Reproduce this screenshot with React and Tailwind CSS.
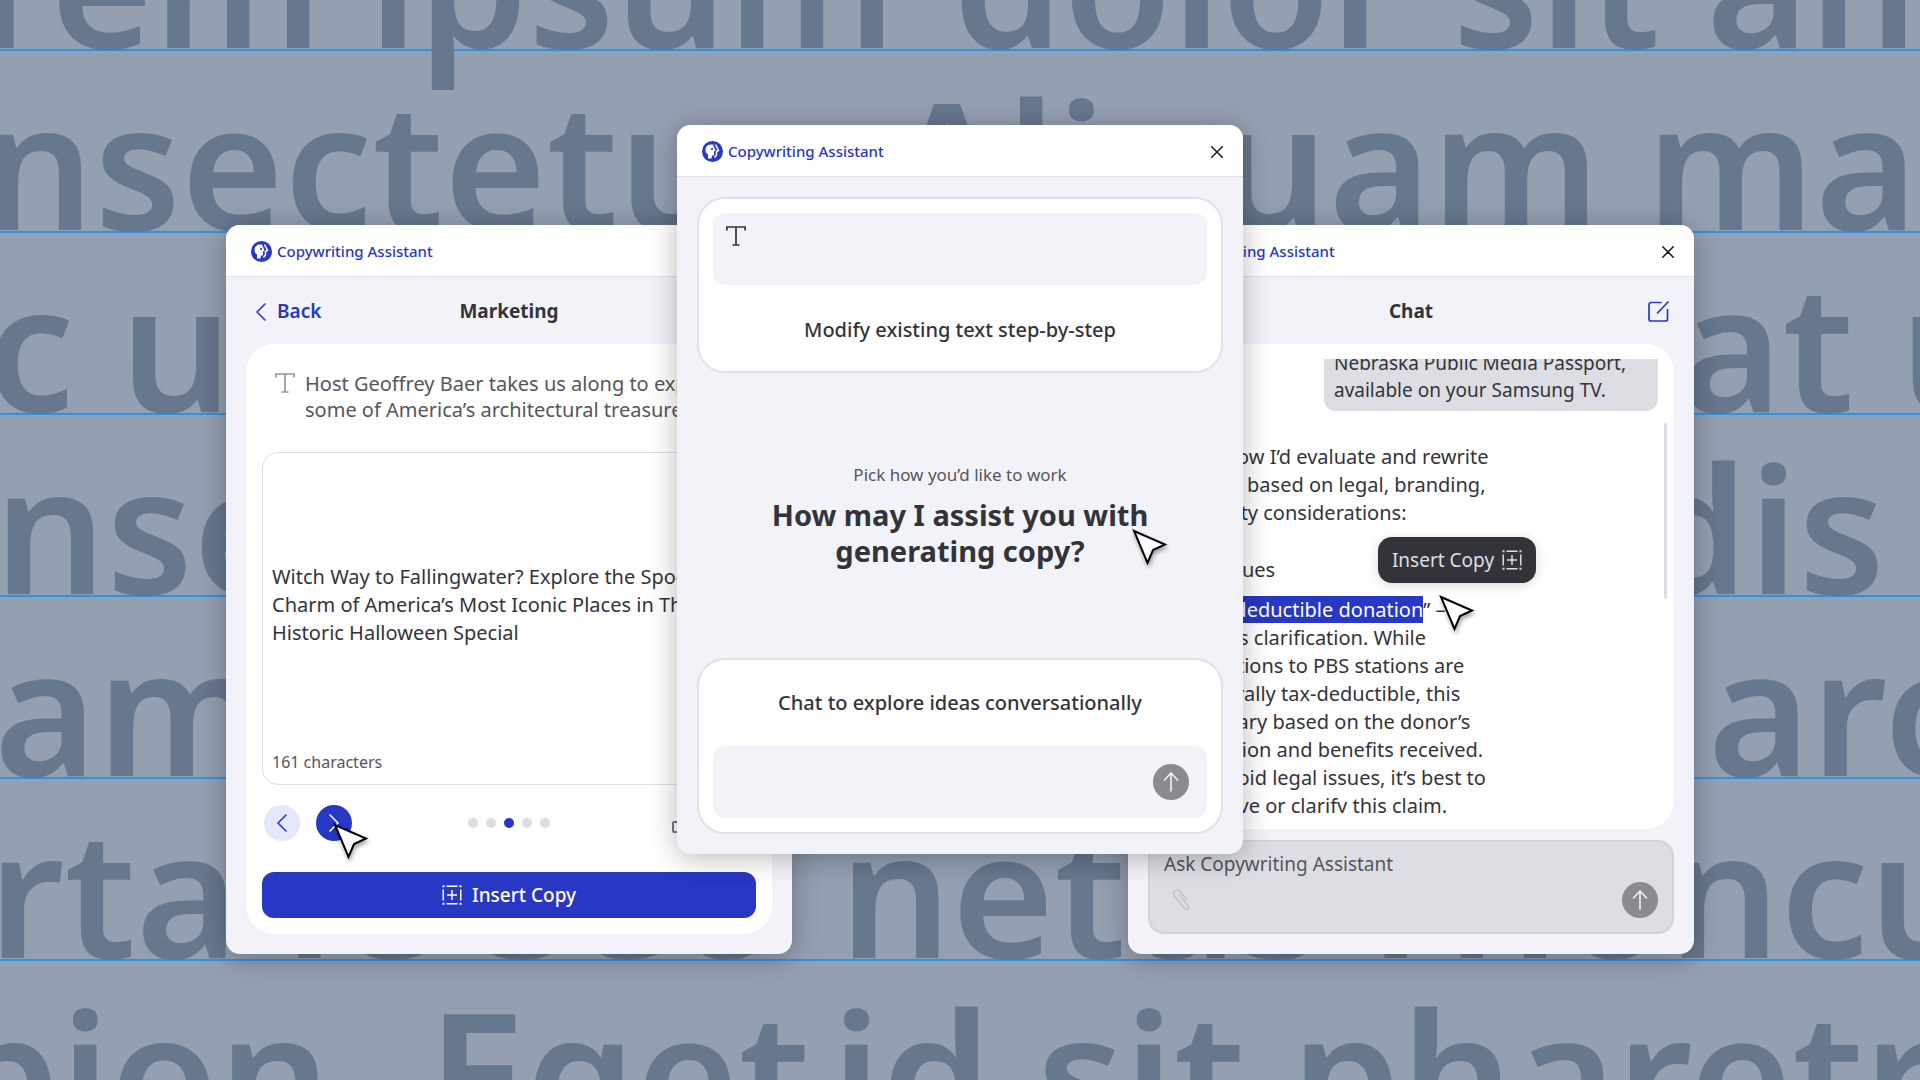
const backdropLines = [
  { left: 'orem ipsum', right: 'dolor sit am', leftShift: '-ml-[131px]', rightShift: '-mr-[58px]' },
  { left: 'nsectetur.', right: 'Aliquam ma', leftShift: '-ml-[18px]', rightShift: 'mr-[2px]' },
  { left: 'c ut', right: 'at u', leftShift: '-ml-[14px]', rightShift: '-mr-[92px]' },
  { left: 'nse', right: 'dis', leftShift: '-ml-[6px]', rightShift: 'mr-[35px]' },
  { left: 'am', right: 'arc', leftShift: '-ml-[6px]', rightShift: '-mr-[52px]' },
  { left: 'rta le sec', mid: 'net', right: 'us rhoncu', leftShift: '-ml-[12px]', midShift: 'ml-[78px]', rightShift: '-mr-[20px]' },
  { left: 'pion.', mid: 'Eget', right: 'id sit pharetr', leftShift: '-ml-[50px]', midShift: 'ml-[48px]', rightShift: '-mr-[20px]' },
];

function Backdrop() {
  return (
    <div aria-hidden="true" className="absolute inset-0 overflow-hidden select-none">
      <div className="-mt-[131px] flex flex-col">
        {backdropLines.map((line) => (
          <div
            key={line.left}
            className="flex h-[182px] shrink-0 border-b-2 border-[#2b93e6] pt-5 text-[176px] leading-[182px] font-semibold whitespace-pre text-[#67778e]"
          >
            <span className={line.leftShift}>{line.left}</span>
            {line.mid && <span className={line.midShift}>{line.mid}</span>}
            <span className={`ml-auto ${line.rightShift}`}>{line.right}</span>
          </div>
        ))}
      </div>
    </div>
  );
}

function Logo() {
  return (
    <svg viewBox="0 0 42 42" className="size-[21px]" aria-hidden="true">
      <circle cx="21" cy="21" r="21" fill="#2638c4" />
      <path d="M7 18c0-7 5-11 11-11h4l5 12-3 2v8h-4l-1 6h-7v-8c-3-2-5-5-5-9z" fill="#fff" />
      <path d="M25 7l6 12-4 2v8l-3 1" fill="none" stroke="#2638c4" strokeWidth="2" />
      <path d="M27 7l6 12-4 2v7l-4 5" fill="none" stroke="#fff" strokeWidth="3" />
      <circle cx="20" cy="16" r="2.200" fill="#2638c4" />
    </svg>
  );
}

function TextIcon({ className }) {
  return (
    <svg viewBox="0 0 20 20" className={`size-5 shrink-0 ${className}`} fill="none" stroke="currentColor" strokeWidth="1.7" aria-hidden="true">
      <path d="M.9 4.500V1h18.200v3.500M10 1v18M6.500 19h7" />
    </svg>
  );
}

function InsertIcon() {
  return (
    <svg viewBox="0 0 20 20" className="size-5 shrink-0" fill="none" stroke="currentColor" strokeWidth="1.5" aria-hidden="true">
      <path d="M4.5 1.25h11M4.5 18.75h11M1.25 4.5v11M18.75 4.5v11M10 5v10M5 10h10" />
      <path d="M.5 1.25H2.500M17.500 1.25h2M.5 18.75h2M17.500 18.75h2" strokeWidth="2" />
    </svg>
  );
}

function CloseIcon() {
  return (
    <svg viewBox="0 0 12 12" className="size-3" fill="none" stroke="currentColor" strokeWidth="1.5" strokeLinecap="round" aria-hidden="true">
      <path d="M.75.75l10.500 10.500M11.250.75L.75 11.250" />
    </svg>
  );
}

function Chevron({ flip }) {
  return (
    <svg viewBox="0 0 10 18" className={flip ? 'h-[18px] w-[10px] rotate-180' : 'h-[18px] w-[10px]'} fill="none" stroke="currentColor" strokeWidth="1.6" strokeLinecap="round" strokeLinejoin="round" aria-hidden="true">
      <path d="M9 1L1 9l8 8" />
    </svg>
  );
}

function Cursor({ className }) {
  return (
    <svg viewBox="0 0 36 38" className={`pointer-events-none absolute z-20 h-[38px] w-9 drop-shadow-[1px_3px_2px_rgba(0,0,0,0.35)] ${className}`} aria-hidden="true">
      <path d="M2 2l31 13.500-12 5.500-5.500 13z" fill="#fff" stroke="#000" strokeWidth="2" />
    </svg>
  );
}

function SendButton() {
  return (
    <button type="button" aria-label="Send" className="flex size-9 shrink-0 items-center justify-center rounded-full bg-[#8b8b8f] text-[#f2f3f8]">
      <svg viewBox="0 0 16 20" className="h-5 w-4" fill="none" stroke="currentColor" strokeWidth="1.6" strokeLinecap="round" strokeLinejoin="round" aria-hidden="true">
        <path d="M8 19V1M1.500 8L8 1l6.500 7" />
      </svg>
    </button>
  );
}

function Window({ className, children }) {
  return (
    <section className={`relative flex h-[729px] w-[566px] shrink-0 flex-col rounded-[14px] bg-[#f2f3f8] shadow-[0_4px_28px_rgba(0,0,0,0.28)] ${className}`}>
      <header className="flex h-[52px] shrink-0 items-center justify-between rounded-t-[14px] border-b border-[#e1e2e6] bg-white px-5 pt-0.5">
        <div className="flex items-center gap-[5px] pl-[5px] text-[15px] font-medium text-[#2638c4]">
          <Logo />
          Copywriting Assistant
        </div>
        <button type="button" aria-label="Close" className="flex size-3 items-center justify-center text-[#1c1c20]">
          <CloseIcon />
        </button>
      </header>
      {children}
    </section>
  );
}

function MarketingWindow() {
  return (
    <Window className="mt-[100px]">
      <div className="grid h-[67px] shrink-0 grid-cols-3 items-center px-[30px] pt-0.5">
        <button type="button" className="flex items-center gap-[11px] text-[19px] font-semibold text-[#2638c4]">
          <Chevron />
          Back
        </button>
        <h2 className="text-center text-[19px] font-bold text-[#33343a]">Marketing</h2>
      </div>
      <div className="mx-5 mb-5 flex flex-1 flex-col rounded-[28px] bg-white px-4 pt-[27px] pb-4">
        <div className="flex gap-[10px] pl-[13px] text-[#55565c]">
          <TextIcon className="mt-[2px] text-[#96979c]" />
          <p className="text-[20px] leading-[26px] whitespace-nowrap">
            Host Geoffrey Baer takes us along to explore
            <br />
            some of America’s architectural treasures.
          </p>
        </div>
        <div className="mt-[29px] flex h-[333px] flex-col rounded-2xl border border-[#dddee3] px-[9px] pb-[10px]">
          <p className="flex flex-1 flex-col justify-center pt-1.5 text-[20px] leading-7 whitespace-nowrap text-[#33343a]">
            <span>Witch Way to Fallingwater? Explore the Spooky</span>
            <span>Charm of America’s Most Iconic Places in This</span>
            <span>Historic Halloween Special</span>
          </p>
          <span className="text-[16px] leading-6 text-[#55565c]">161 characters</span>
        </div>
        <div className="mt-5 flex items-center justify-between px-[2px]">
          <div className="flex w-24 gap-4">
            <button type="button" aria-label="Previous" className="flex size-9 items-center justify-center rounded-full bg-[#e3e8fa] text-[#2638c4]">
              <Chevron />
            </button>
            <button type="button" aria-label="Next" className="relative flex size-9 items-center justify-center rounded-full bg-[#2638c4] text-white">
              <Chevron flip />
              <Cursor className="top-[18px] left-[17px]" />
            </button>
          </div>
          <div className="flex gap-2">
            <span className="size-2.5 rounded-full bg-[#dddee3]" />
            <span className="size-2.5 rounded-full bg-[#dddee3]" />
            <span className="size-2.5 rounded-full bg-[#2638c4]" />
            <span className="size-2.5 rounded-full bg-[#dddee3]" />
            <span className="size-2.5 rounded-full bg-[#dddee3]" />
          </div>
          <div className="flex w-24 pl-[14px] pt-2 text-[#77787d]">
            <span className="h-3 w-4 rounded-[2px] border-2 border-current" />
          </div>
        </div>
        <button type="button" className="mt-auto flex h-[46px] items-center justify-center gap-[10px] rounded-xl bg-[#2638c4] text-[19px] font-medium text-white">
          <InsertIcon />
          Insert Copy
        </button>
      </div>
    </Window>
  );
}

function StartWindow() {
  return (
    <Window className="z-10 -mx-[115px]">
      <div className="flex flex-1 flex-col justify-between px-5 pt-5 pb-5">
        <button type="button" className="flex h-44 flex-col rounded-[28px] border-2 border-[#e1e2e6] bg-white p-[14px]">
          <span className="flex h-[72px] w-full rounded-xl bg-[#f2f3f8] p-[13px]">
            <TextIcon className="text-[#33343a]" />
          </span>
          <span className="flex w-full flex-1 items-center justify-center pt-[18px] text-[20px] font-medium text-[#33343a]">
            Modify existing text step-by-step
          </span>
        </button>
        <div className="relative text-center">
          <p className="text-[17px] leading-6 text-[#55565c]">Pick how you’d like to work</p>
          <h1 className="mt-[10px] text-[29px] leading-9 font-bold text-[#33343a]">
            How may I assist you with
            <br />
            generating copy?
          </h1>
          <Cursor className="top-[66px] right-[55px]" />
        </div>
        <div className="flex h-44 flex-col rounded-[28px] border-2 border-[#e1e2e6] bg-white p-[14px]">
          <label htmlFor="start-chat" className="flex flex-1 items-center justify-center pb-[14px] text-[20px] font-medium text-[#33343a]">
            Chat to explore ideas conversationally
          </label>
          <div className="flex h-[72px] items-center rounded-xl bg-[#f2f3f8] pr-[18px] pl-4">
            <input id="start-chat" type="text" className="h-full min-w-0 flex-1 bg-transparent outline-none" />
            <SendButton />
          </div>
        </div>
      </div>
    </Window>
  );
}

function ChatWindow() {
  return (
    <Window className="mt-[100px]">
      <div className="grid h-[67px] shrink-0 grid-cols-3 items-center px-[25px] pt-0.5">
        <h2 className="col-start-2 text-center text-[19px] font-bold text-[#33343a]">Chat</h2>
        <button type="button" aria-label="New chat" className="justify-self-end text-[#2638c4]">
          <svg viewBox="0 0 21 21" className="size-[21px]" fill="none" stroke="currentColor" strokeWidth="1.700" strokeLinecap="round" strokeLinejoin="round" aria-hidden="true">
            <path d="M13 1.500H3A2 2 0 0 0 1 3.500v14.500a2 2 0 0 0 2 2h14.500a2 2 0 0 0 2-2V8.500M9.500 12L20 1" />
          </svg>
        </button>
      </div>
      <div className="mx-5 flex h-[485px] gap-[6px] rounded-[28px] bg-white pt-[15px] pb-4 pr-[7px] pl-[14px]">
        <div className="flex flex-1 flex-col overflow-hidden text-[20px] leading-7 whitespace-nowrap text-[#33343a]">
          <p className="-mt-[41px] flex w-[334px] shrink-0 flex-col self-end rounded-xl bg-[#dddee3] px-[10px] pt-[5px] pb-[7px] text-[19px] leading-[27px]">
            <span>Watch it now with</span>
            <span>Nebraska Public Media Passport,</span>
            <span>available on your Samsung TV.</span>
          </p>
          <div className="mt-8 flex flex-col">
            <span>Here’s how I’d evaluate and rewrite</span>
            <span>the copy based on legal, branding,</span>
            <span>for quality considerations:</span>
          </div>
          <span className="mt-[29px]">Legal issues</span>
          <div className="mt-3 flex flex-col pl-[27px]">
            <span>
              “<mark className="bg-[#2638c4] text-white">Tax-deductible donation</mark>” –
            </span>
            <span>Needs clarification. While</span>
            <span>donations to PBS stations are</span>
            <span>generally tax-deductible, this</span>
            <span>can vary based on the donor’s</span>
            <span>situation and benefits received.</span>
            <span>To avoid legal issues, it’s best to</span>
            <span>remove or clarify this claim.</span>
          </div>
        </div>
        <div className="mt-16 h-[176px] w-[3px] shrink-0 rounded-full bg-[#dddee3]" />
      </div>
      <button type="button" className="absolute top-[312px] left-[250px] flex h-[46px] w-[158px] items-center justify-center gap-2 rounded-[14px] bg-[#33343a] text-[19px] text-[#dddee3] shadow-[0_2px_12px_rgba(0,0,0,0.15)]">
        Insert Copy
        <InsertIcon />
      </button>
      <Cursor className="top-[370px] left-[311px]" />
      <div className="mx-5 mt-[11px] flex h-[94px] flex-col rounded-2xl border-2 border-[#d3d4d8] bg-[#dddee3] px-[14px] pt-2">
        <input type="text" aria-label="Message" placeholder="Ask Copywriting Assistant" className="h-7 bg-transparent text-[19px] outline-none placeholder:text-[#55565c]" />
        <div className="mt-1 flex items-center justify-between pl-2">
          <button type="button" aria-label="Attach file" className="text-[#bfc0c4]">
            <svg viewBox="0 0 18 22" className="h-[22px] w-[18px]" fill="none" stroke="currentColor" strokeWidth="1.400" strokeLinecap="round" aria-hidden="true">
              <path d="M14.500 10L8 2.500a3.500 3.500 0 0 0-5.500 4.500l10 12.500a2.300 2.300 0 0 0 3.600-2.900L7.500 6" />
            </svg>
          </button>
          <SendButton />
        </div>
      </div>
    </Window>
  );
}

export default function App() {
  return (
    <main className="relative min-h-screen overflow-hidden bg-[#949fb1] font-['Noto_Sans',sans-serif]">
      <Backdrop />
      <div className="relative flex items-start justify-center pt-[125px]">
        <MarketingWindow />
        <StartWindow />
        <ChatWindow />
      </div>
    </main>
  );
}
